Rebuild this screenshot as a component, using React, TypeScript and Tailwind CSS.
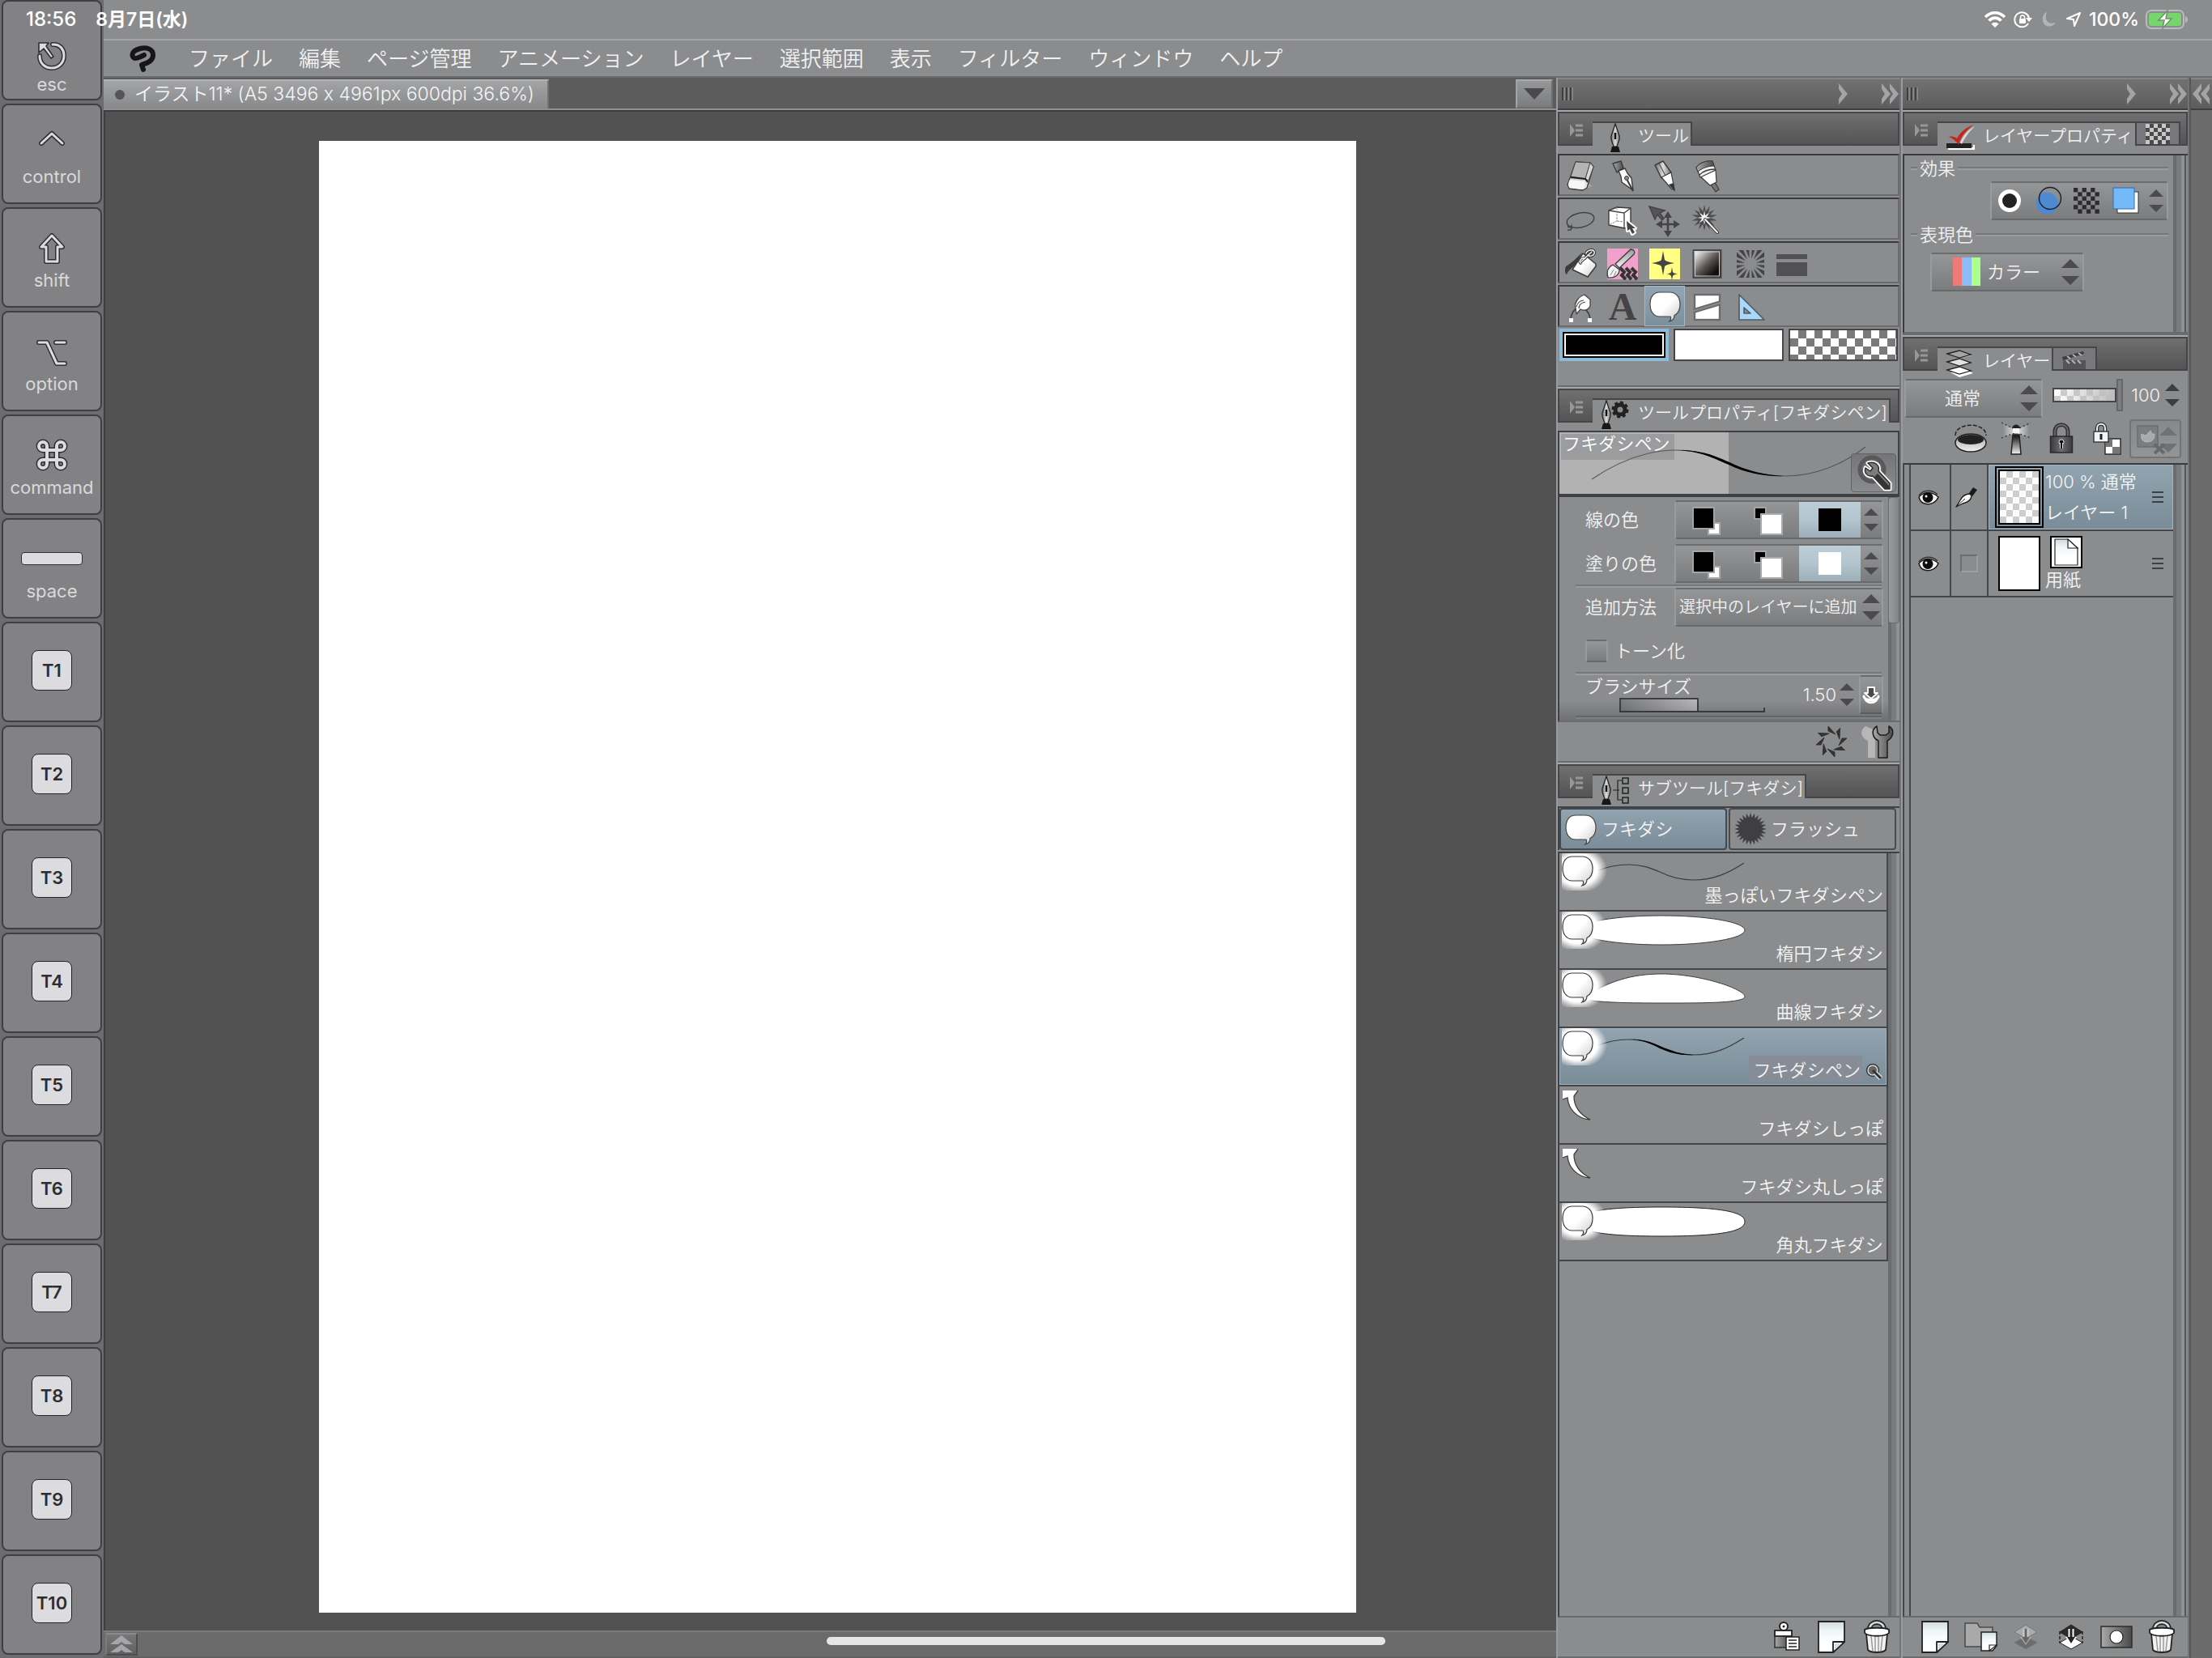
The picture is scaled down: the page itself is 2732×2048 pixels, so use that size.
import React from "react";
import type { ReactNode } from "react";

/* ---------- shared gradients ---------- */

function Defs() {
  return (
    <svg width="0" height="0" className="absolute" aria-hidden="true">
      <defs>
        <linearGradient id="wg" x1="0" y1="0" x2="1" y2="1">
          <stop offset="0.5" stopColor="#ffffff" />
          <stop offset="1" stopColor="#c9c9c9" />
        </linearGradient>
        <linearGradient id="gw" x1="0" y1="0" x2="0" y2="1">
          <stop offset="0" stopColor="#9b9b9b" />
          <stop offset="1" stopColor="#f4f4f4" />
        </linearGradient>
        <linearGradient id="metal" x1="0" y1="0" x2="1" y2="0">
          <stop offset="0" stopColor="#6b6b6b" />
          <stop offset="0.5" stopColor="#dddddd" />
          <stop offset="1" stopColor="#777777" />
        </linearGradient>
        <linearGradient id="wb" x1="0" y1="0" x2="1" y2="1">
          <stop offset="0.05" stopColor="#ffffff" />
          <stop offset="0.5" stopColor="#5a5452" />
          <stop offset="0.8" stopColor="#140c0c" />
        </linearGradient>
        <linearGradient id="bw" x1="0" y1="0" x2="0" y2="1">
          <stop offset="0.1" stopColor="#222222" />
          <stop offset="1" stopColor="#f4f4f4" />
        </linearGradient>
        <linearGradient id="dark" x1="0" y1="0" x2="1" y2="0">
          <stop offset="0" stopColor="#a9a9a9" />
          <stop offset="1" stopColor="#4a4a4a" />
        </linearGradient>
        <linearGradient id="lockg" x1="0" y1="0" x2="1" y2="0">
          <stop offset="0" stopColor="#3a3a3c" />
          <stop offset="0.5" stopColor="#6e6e70" />
          <stop offset="1" stopColor="#3a3a3c" />
        </linearGradient>
        <linearGradient id="paper" x1="0" y1="0" x2="0" y2="1">
          <stop offset="0" stopColor="#d3dadd" />
          <stop offset="0.3" stopColor="#eef5f8" />
          <stop offset="0.7" stopColor="#ffffff" />
        </linearGradient>
        <linearGradient id="beam" x1="0" y1="0" x2="1" y2="0">
          <stop offset="0" stopColor="#8b8c8e" />
          <stop offset="0.5" stopColor="#ececec" />
          <stop offset="1" stopColor="#8b8c8e" />
        </linearGradient>
        <radialGradient id="glow" cx="0.36" cy="0.44" r="0.64">
          <stop offset="0.66" stopColor="#ffffff" />
          <stop offset="1" stopColor="#ffffff" stopOpacity="0" />
        </radialGradient>
        <pattern id="chk" width="20" height="20" patternUnits="userSpaceOnUse">
          <rect width="20" height="20" fill="#ffffff" />
          <rect x="10" width="10" height="10" fill="#7a7a7a" />
          <rect y="10" width="10" height="10" fill="#7a7a7a" />
        </pattern>
        <pattern id="chkLight" width="16" height="16" patternUnits="userSpaceOnUse">
          <rect width="16" height="16" fill="#ffffff" />
          <rect x="8" width="8" height="8" fill="#cdcdcd" />
          <rect y="8" width="8" height="8" fill="#cdcdcd" />
        </pattern>
        <pattern id="chkTab" width="10" height="10" patternUnits="userSpaceOnUse">
          <rect width="10" height="10" fill="#c8c8c8" />
          <rect x="5" width="5" height="5" fill="#4a4a4a" />
          <rect y="5" width="5" height="5" fill="#4a4a4a" />
        </pattern>
      </defs>
    </svg>
  );
}

/* ---------- small shared drawings ---------- */

function Svg({ w = 48, h = 48, className = "", children }: { w?: number; h?: number; className?: string; children: ReactNode }) {
  return (
    <svg width={w} height={h} viewBox={`0 0 ${w} ${h}`} fill="none" className={`block shrink-0 ${className}`} aria-hidden="true">
      {children}
    </svg>
  );
}

const BUBBLE = "M13 1H25C33 1 38 7 38 16C38 23 36 27 31 29.500C31 33 29 36 25 37C27 35 27 33 26 31H13C5 31 1 24 1 16C1 7 5 1 13 1Z";

function Arrows({ big = false, fill = "#4b4b4d" }: { big?: boolean; fill?: string }) {
  return big ? (
    <Svg w={22} h={32}>
      <path d="M11 0L22 11H0ZM11 32L22 21H0Z" fill={fill} />
    </Svg>
  ) : (
    <Svg w={18} h={28}>
      <path d="M9 0L18 9H0ZM9 28L18 19H0Z" fill={fill} />
    </Svg>
  );
}

function Nib() {
  return (
    <g>
      <path d="M12 1L17 16C18 21 15 25 14 29H10C9 25 6 21 7 16Z" fill="url(#metal)" stroke="#1c1c1c" strokeWidth="1.2" />
      <path d="M12 12V20" stroke="#111" strokeWidth="2.4" />
      <path d="M8 29H16L18 36H6Z" fill="#161616" />
    </g>
  );
}

function Wrench() {
  return (
    <Svg w={52} h={48}>
      <circle cx="24" cy="20" r="15" stroke="#59595b" strokeWidth="5" fill="#6d6d6f" />
      <path d="M19 12L25 18L22 22L16 18C14 24 18 29 25 28L40 44H46V37L32 22C34 15 28 9 19 12Z" fill="#6a6a6c" stroke="#fff" strokeWidth="5" strokeLinejoin="round" />
      <path d="M19 12L25 18L22 22L16 18C14 24 18 29 25 28L40 44H46V37L32 22C34 15 28 9 19 12Z" fill="#7c7c7e" stroke="#2c2c2c" strokeWidth="1.5" strokeLinejoin="round" />
      <path d="M31 25L45 40V44H41L27 29Z" fill="#333" />
    </Svg>
  );
}

/* ---------- left modifier key strip ---------- */

function Outlined({ d, w = 4 }: { d: string; w?: number }) {
  return (
    <Svg w={48} h={48} className="[stroke-linecap:round] [stroke-linejoin:round]">
      <path d={d} stroke="#2f2f31" strokeWidth={w + 3} />
      <path d={d} stroke="#dcdcde" strokeWidth={w} />
    </Svg>
  );
}

const modifierKeys: { label: string; icon: ReactNode }[] = [
  { label: "control", icon: <Outlined d="M11 23L24 11L37 23" w={3} /> },
  { label: "shift", icon: <Outlined d="M24 9L37 23H31V41H17V23H11Z" w={3} /> },
  { label: "option", icon: <Outlined d="M8 13H18L30 39H40M29 13H40" w={3} /> },
  {
    label: "command",
    icon: <Outlined d="M18 18V13A5 5 0 1 0 13 18H35A5 5 0 1 0 30 13V35A5 5 0 1 0 35 30H13A5 5 0 1 0 18 35Z" />,
  },
];

const fnKeys = ["T1", "T2", "T3", "T4", "T5", "T6", "T7", "T8", "T9", "T10"];

function Key({ children, className }: { children: ReactNode; className: string }) {
  return (
    <button type="button" className={`flex min-h-0 flex-col items-center overflow-hidden rounded-lg border-2 border-[#3f3f42] bg-[#828284] ${className}`}>
      {children}
    </button>
  );
}

function KeyLabel({ children }: { children: ReactNode }) {
  return <span className="text-[22px] leading-8 text-[#d9d9db]">{children}</span>;
}

function KeyStrip() {
  return (
    <aside className="grid w-32 shrink-0 grid-rows-[repeat(16,minmax(0,1fr))] gap-1 bg-[#6d6d6f] px-0.5 pb-1">
      <Key className="pt-[46px]">
        <Svg w={48} h={40} className="[stroke-linejoin:round]">
          <path d="M25 7C34 6 39 13 39 21C39 29 33 36 24 36C15 36 9 30 9 21" stroke="#2f2f31" strokeWidth="6" strokeLinecap="round" />
          <path d="M8 5H20L17 9L26 22L23 24L14 12L8 17Z" fill="#dcdcde" stroke="#2f2f31" strokeWidth="1.6" />
          <path d="M25 7C34 6 39 13 39 21C39 29 33 36 24 36C15 36 9 30 9 21" stroke="#dcdcde" strokeWidth="3" strokeLinecap="round" />
        </Svg>
        <KeyLabel>esc</KeyLabel>
      </Key>
      {modifierKeys.map((k) => (
        <Key key={k.label} className="pt-6">
          {k.icon}
          <KeyLabel>{k.label}</KeyLabel>
        </Key>
      ))}
      <Key className="pt-6">
        <span className="flex h-12 items-center">
          <span className="h-4 w-[76px] rounded border border-[#2f2f31] bg-[#dcdcde]" />
        </span>
        <KeyLabel>space</KeyLabel>
      </Key>
      {fnKeys.map((k) => (
        <Key key={k} className="pt-[33px]">
          <span className="flex h-[50px] w-[50px] items-center justify-center rounded-lg border border-[#232325] bg-[#dcdcde] text-[22px] font-semibold text-[#2d2d2f]">
            {k}
          </span>
        </Key>
      ))}
    </aside>
  );
}

/* ---------- status bar and menu ---------- */

function StatusBar() {
  return (
    <header className="pointer-events-none absolute inset-x-0 top-0 flex h-12 items-center pr-7 pl-8 text-[23px] font-medium text-white">
      <time className="text-[24px]">18:56</time>
      <span className="ml-6 font-semibold">8月7日(水)</span>
      <div className="ml-auto flex items-center gap-2">
        <Svg w={28} h={22}>
          <path d="M2 8C9 1 19 1 26 8M6.500 12.500C11 8 17 8 21.500 12.500" stroke="#fff" strokeWidth="3.600" />
          <path d="M14 21L9.500 16.500C12 14 16 14 18.500 16.500Z" fill="#fff" />
        </Svg>
        <Svg w={24} h={22}>
          <path d="M19 16A9 9 0 1 1 20 9" stroke="#fff" strokeWidth="2" />
          <path d="M16 9H24L20 14Z" fill="#fff" />
          <rect x="8" y="10" width="8" height="6" rx="1" fill="#fff" />
          <path d="M9.500 10V8.500A2.500 2.500 0 0 1 14.500 8.500V10" stroke="#fff" strokeWidth="1.500" />
        </Svg>
        <Svg w={24} h={22}>
          <path d="M10 2C6 12 12 18 21 15C16 23 4 20 5 10C5 6 7 3 10 2Z" fill="#b3b4b6" />
        </Svg>
        <Svg w={22} h={22}>
          <path d="M19 3L12 19L11 11L3 10Z" stroke="#fff" strokeWidth="2" strokeLinejoin="round" />
        </Svg>
        <span>100%</span>
        <Svg w={54} h={24}>
          <rect x="1" y="1" width="46" height="22" rx="6" stroke="#b9babc" strokeWidth="2" />
          <rect x="4" y="4" width="40" height="16" rx="3" fill="#74d66d" />
          <path d="M49 8C53 9 53 15 49 16Z" fill="#b9babc" />
          <path d="M27 1L16 13H23L21 23L32 11H25Z" fill="#fff" stroke="#6f8f70" strokeWidth="1.500" />
        </Svg>
      </div>
    </header>
  );
}

const menus = ["ファイル", "編集", "ページ管理", "アニメーション", "レイヤー", "選択範囲", "表示", "フィルター", "ウィンドウ", "ヘルプ"];

function MenuBar() {
  return (
    <nav className="flex h-12 shrink-0 items-center gap-8 border-t-2 border-b-2 border-t-[#a5a6a8] border-b-[#6a6b6d] pt-0.5 pl-8 text-[26px] font-[350] text-[#f1f1f1]">
      <button type="button" aria-label="CLIP STUDIO" className="mr-[7px]">
        <Svg w={34} h={34}>
          <path d="M17 30L15 24C23 22 29 18 29 12C29 4 20 2 13 4C6 6 2 9 4 14C6 18 12 15 18 12" stroke="#161618" strokeWidth="6" strokeLinecap="round" strokeLinejoin="round" />
        </Svg>
      </button>
      {menus.map((m) => (
        <button key={m} type="button" className="leading-10">
          {m}
        </button>
      ))}
    </nav>
  );
}

/* ---------- canvas ---------- */

function Workspace() {
  return (
    <main className="flex min-w-0 flex-1 flex-col">
      <div className="flex h-10 shrink-0 items-end justify-between border-b-2 border-[#8f9092] bg-[#5c5c5c] pr-1">
        <button type="button" className="flex h-9 items-center gap-3 border-t-2 border-r-2 border-t-[#b1b2b4] border-r-[#707173] bg-linear-to-b from-[#a3a4a6] to-[#88898b] pr-4 pl-3.5 text-[23px] font-[350] text-[#f4f4f4]">
          <span className="h-3 w-3 rounded-full bg-[#555557]" />
          <span className="-mt-0.5 [font-feature-settings:'calt'_0]">イラスト11* (A5 3496 x 4961px 600dpi 36.6%)</span>
        </button>
        <button type="button" aria-label="ドキュメント一覧" className="flex h-9 w-[46px] items-center justify-center border-2 border-t-[#a9aaac] border-r-[#6d6e70] border-b-[#6d6e70] border-l-[#a3a4a6] bg-linear-to-b from-[#969799] to-[#7c7d7f]">
          <Svg w={26} h={14}>
            <path d="M0 0H26L13 14Z" fill="#4a4a4c" />
          </Svg>
        </button>
      </div>
      <div className="flex min-h-0 flex-1 flex-col border-t-2 border-l-2 border-[#3d3d41] bg-[#525252] pt-9 pr-[247px] pb-[22px] pl-[264px]">
        <div className="flex-1 bg-white" />
      </div>
      <footer className="flex h-[34px] shrink-0 items-center border-t-2 border-b-2 border-t-[#7b7b7d] border-b-[#5f5f61] bg-[#6b6b6b] pl-0.5">
        <button type="button" aria-label="パレットを表示" className="flex h-7 w-10 items-center justify-center border-2 border-t-[#8b8b8d] border-r-[#4e4e50] border-b-[#4e4e50] border-l-[#7b7b7d] bg-linear-to-b from-[#777779] to-[#606062]">
          <Svg w={28} h={22}>
            <path d="M14 0L28 11H18L14 8L10 11H0ZM14 11L28 21H18L14 18L10 21H0Z" fill="#a5a6a8" />
          </Svg>
        </button>
      </footer>
    </main>
  );
}

/* ---------- docks ---------- */

function Dock({ className, children }: { className: string; children: ReactNode }) {
  return (
    <section className={`flex shrink-0 flex-col border-x-2 border-l-[#9a9b9f] border-r-[#727377] bg-[#8b8c8e] ${className}`}>
      <div className="flex h-10 shrink-0 items-center border-t-2 border-b-2 border-t-[#858688] border-b-[#3f3f41] bg-linear-to-b from-[#717171] to-[#5d5d5d] pl-1">
        <Svg w={18} h={16}>
          <path d="M2 0V16M7 0V16M12 0V16" stroke="#3e3e40" strokeWidth="2" />
          <path d="M4 0V16M9 0V16M14 0V16" stroke="#a0a0a2" strokeWidth="1" />
        </Svg>
        <button type="button" aria-label="アイコン化" className="ml-auto">
          <Svg w={11} h={26}>
            <path d="M0 0L11 13L0 26V19L4 13L0 7Z" fill="#a3a4a6" />
          </Svg>
        </button>
        <button type="button" aria-label="最小化" className="ml-[42px]">
          <Svg w={22} h={26}>
            <path d="M0 0L11 13L0 26V19L4 13L0 7ZM10 0L21 13L10 26V19L14 13L10 7Z" fill="#a3a4a6" />
          </Svg>
        </button>
      </div>
      {children}
    </section>
  );
}

function Panel({ icon, title, extra, iconBox = "w-14", className = "", children }: { icon: ReactNode; title: string; extra?: ReactNode; iconBox?: string; className?: string; children: ReactNode }) {
  return (
    <section className={`flex flex-col border-t-2 border-b-2 border-t-[#a8a9ab] border-b-[#6a6b6d] ${className}`}>
      <div className="mb-2.5 flex h-[42px] shrink-0 items-end border-2 border-[#46464a] bg-linear-to-b from-[#707070] to-[#545454]">
        <button type="button" aria-label={`${title} メニュー`} className="flex h-full w-[41px] items-center justify-center pt-1">
          <Svg w={16} h={16}>
            <path d="M0 0L6 8L0 16Z" fill="#97979a" />
            <path d="M7 2H16M7 8H16M7 14H16" stroke="#97979a" strokeWidth="3" />
          </Svg>
        </button>
        <h2 className="-mb-0.5 flex h-[30px] items-start border-t-2 border-r-2 border-[#46464a] bg-[#8b8c8e] pr-0.5 text-[21px] leading-8 font-[350] whitespace-nowrap text-[#f2f2f2]">
          <span className={`h-7 ${iconBox}`}>{icon}</span>
          {title}
        </h2>
        {extra}
      </div>
      {children}
    </section>
  );
}

function ScrollTrack({ thumb = false }: { thumb?: boolean }) {
  return (
    <div className="flex w-[14px] shrink-0 flex-col border-x-4 border-l-[#6b6c6e] border-r-[#909193] bg-[#7a7b80]">
      {thumb ? <div className="-mx-1 h-[156px] rounded-sm border border-[#6a6b6d] bg-linear-to-r from-[#9b9ca0] to-[#818286]" /> : null}
    </div>
  );
}

/* ---------- tool palette ---------- */

const INK = "#444446";

function rays(cx: number, cy: number, n: number, r1: number, r2: number) {
  return Array.from({ length: n * 2 }, (_, i) => {
    const a = (Math.PI * i) / n;
    const r = i % 2 ? r1 : r2;
    return `${(cx + r * Math.sin(a)).toFixed(1)},${(cy - r * Math.cos(a)).toFixed(1)}`;
  }).join(" ");
}

const toolRows: { name: string; icon: ReactNode; active?: boolean }[][] = [
  [
    {
      name: "消しゴム",
      icon: (
        <Svg>
          <path d="M28 42L39 38L34 34Z" fill="#a5a5a7" />
          <path d="M18 8L36 9L40 14L32 40L27 43L10 41L8 36L12 25Z" fill="url(#gw)" stroke="#3a3a3a" strokeWidth="1.3" strokeLinejoin="round" />
          <path d="M12 26L30 29L36 9L18 8Z" fill="#b4b4b4" stroke="#4a4a4a" strokeWidth="1" />
          <path d="M30 29L34 31L40 14L36 9Z" fill="#d8d8d8" stroke="#4a4a4a" />
          <path d="M12 27L30 29L33 33" stroke="#1e1e1e" strokeWidth="2" />
          <path d="M11 30L30 32C30 37 28 40 26 42L11 40C8 38 9 33 11 30Z" fill="#f7f7f7" />
        </Svg>
      ),
    },
    {
      name: "ペン",
      icon: (
        <Svg>
          <path d="M12 10L22 7L25 15L17 21Z" fill="url(#dark)" stroke="#3a3a3a" strokeWidth="1.4" strokeLinejoin="round" />
          <path d="M19 19L27 16L30 22L35 28L37 43L23 33L22 26Z" fill="#f8f8f8" stroke="#3a3a3a" strokeWidth="1.4" strokeLinejoin="round" />
          <path d="M29 29L37 44" stroke="#3a3a3a" strokeWidth="2" />
          <circle cx="29" cy="28" r="2.500" fill="#8a8a8a" stroke="#3a3a3a" />
        </Svg>
      ),
    },
    {
      name: "鉛筆",
      icon: (
        <Svg>
          <path d="M12 12L22 7L32 21L20 28Z" fill="url(#metal)" stroke="#3a3a3a" strokeWidth="1.4" strokeLinejoin="round" />
          <path d="M17 10L25 25" stroke="#555" strokeWidth="1.200" />
          <path d="M20 27L32 21L36 42L33 42Z" fill="#fff" stroke="#3a3a3a" strokeWidth="1.2" strokeLinejoin="round" />
          <path d="M29 36L35 34L37 45Z" fill="#333" />
        </Svg>
      ),
    },
    {
      name: "筆",
      icon: (
        <Svg>
          <path d="M29 36L34 33L39 42L35 45Z" fill="#777" stroke="#3a3a3a" strokeWidth="1.2" />
          <path d="M16 26L35 18L36 33L28 37Z" fill="#fff" stroke="#3a3a3a" strokeWidth="1.2" strokeLinejoin="round" />
          <path d="M11 15C15 9 24 6 31 7L35 18L16 27Z" fill="#f0f0f0" stroke="#3a3a3a" strokeWidth="1.2" strokeLinejoin="round" />
          <path d="M11 15C15 9 24 6 31 7L33 13C25 13 18 16 13 20Z" fill="url(#dark)" stroke="#3a3a3a" />
          <path d="M15 24C20 19 27 17 34 17" stroke="#3a3a3a" strokeWidth="1.500" />
        </Svg>
      ),
    },
  ],
  [
    {
      name: "投げなわ選択",
      icon: (
        <Svg>
          <ellipse cx="24" cy="26" rx="17" ry="9" transform="rotate(-12 24 26)" stroke={INK} strokeWidth="1.5" />
          <path d="M9 32C7 35 12 36 13 33C14 37 12 39 8 38" stroke={INK} strokeWidth="1.5" />
        </Svg>
      ),
    },
    {
      name: "操作",
      icon: (
        <Svg>
          <path d="M7 14L17 10L34 11V31L27 36L7 32Z" fill="#fff" stroke="#3c3c3c" strokeWidth="1.4" strokeLinejoin="round" />
          <path d="M7 14L26 17V36M26 17L34 11" stroke="#3c3c3c" strokeWidth="1.300" />
          <path d="M17 10V27L7 32M17 27L34 29" stroke="#8d8d8d" strokeDasharray="3 1" />
          <path d="M29 27L30 39L33 37L36 43L39 41L36 36L40 36Z" fill="#444" stroke="#fff" strokeWidth="4" strokeLinejoin="round" />
          <path d="M29 27L30 39L33 37L36 43L39 41L36 36L40 36Z" fill="#444" />
        </Svg>
      ),
    },
    {
      name: "レイヤー移動",
      icon: (
        <Svg>
          <path d="M5 9L24 14L18 17L23 24L21 26L15 19L12 25Z" fill="#555557" stroke={INK} strokeWidth="1.500" />
          <path d="M28 20V42M17 31H39" stroke={INK} strokeWidth="2.600" />
          <path d="M28 15L33 23H23ZM28 47L33 39H23ZM13 31L21 26V36ZM43 31L35 26V36Z" fill={INK} />
        </Svg>
      ),
    },
    {
      name: "自動選択",
      icon: (
        <Svg>
          <polygon points={rays(21, 23, 14, 8, 16)} fill="#4c4c4e" />
          <polygon points={rays(21, 23, 8, 3, 9)} fill="#f5f5f5" />
          <path d="M22 25L37 41" stroke="#333" strokeWidth="4" strokeLinecap="round" />
          <path d="M22 25L37 41" stroke="#f5f5f5" strokeWidth="2" strokeLinecap="round" />
        </Svg>
      ),
    },
  ],
  [
    {
      name: "塗りつぶし",
      icon: (
        <Svg>
          <path d="M27 13L43 26V29L33 42L14 33Z" fill="url(#wg)" stroke="#3c3c3c" strokeWidth="1.500" strokeLinejoin="round" />
          <path d="M26 12C18 20 14 24 6 29C4 34 5 38 7 39C9 33 16 30 19 25Z" fill="#3c3c3c" />
          <path d="M24 25C22 23 24 18 30 19M25 23L38 11M31 13C32 9 40 7 41 11C42 15 36 18 33 15" stroke="#333" strokeWidth="3.500" strokeLinecap="round" />
          <path d="M24 25C22 23 24 18 30 19M25 23L38 11M31 13C32 9 40 7 41 11C42 15 36 18 33 15" stroke="#f5f5f5" strokeWidth="1.500" strokeLinecap="round" />
        </Svg>
      ),
    },
    {
      name: "パターンブラシ",
      icon: (
        <Svg>
          <rect x="5" y="7" width="38" height="38" fill="#f19fcb" />
          <path d="M21 31L26 36L23 40L28 45M28 31L33 36L30 40L35 45M35 31L40 36L37 40L42 45" stroke="#333" strokeWidth="4" />
          <path d="M15 26L34 8C38 8 40 11 38 14L20 31Z" fill="url(#gw)" stroke="#3c3c3c" strokeWidth="1.3" />
          <path d="M12 27L20 33C20 40 14 44 6 43C4 36 6 30 12 27Z" fill="#f3f3f3" stroke="#3c3c3c" strokeWidth="1.3" />
          <path d="M9 40L13 33M13 42L16 35" stroke="#888" />
        </Svg>
      ),
    },
    {
      name: "デコレーション",
      icon: (
        <Svg>
          <rect x="5" y="7" width="38" height="38" fill="#fffd82" />
          <path d="M22 10L24 21Q25 23 36 25Q25 27 24 29L22 40L20 29Q19 27 8 25Q19 23 20 21Z" fill={INK} />
          <path d="M33 30L34 36Q35 38 41 38Q35 39 34 41L33 46L32 41Q31 39 26 38Q31 38 32 36Z" fill={INK} />
        </Svg>
      ),
    },
    {
      name: "グラデーション",
      icon: (
        <Svg>
          <rect x="7.500" y="9" width="34" height="34" fill="url(#wb)" stroke="#48484a" strokeWidth="2" />
          <rect x="9.500" y="11" width="30" height="30" stroke="#d0d0d0" />
        </Svg>
      ),
    },
    {
      name: "集中線",
      icon: (
        <Svg>
          <svg x="9" y="9" width="34" height="34" viewBox="0 0 34 34">
            {Array.from({ length: 16 }, (_, i) => (
              <path key={i} d="M17 10L13.500 -9H20.500Z" fill={INK} transform={`rotate(${i * 22.5 + 11} 17 17)`} />
            ))}
          </svg>
        </Svg>
      ),
    },
    {
      name: "流線",
      icon: (
        <Svg>
          <path d="M6 14H44V20H6ZM6 24H44V41H6Z" fill="#515153" />
        </Svg>
      ),
    },
  ],
  [
    {
      name: "線修正",
      icon: (
        <Svg>
          <path d="M12 40C13 31 18 26 24 26S35 32 36 40" stroke={INK} strokeWidth="1.800" />
          <path d="M29 10L36 16V24C33 30 28 30 24 28L19 34L18 26C16 20 22 12 29 10Z" fill="#fff" stroke={INK} strokeWidth="1.300" strokeLinejoin="round" />
          <path d="M22 27C22 23 25 20 30 19M19 25C20 20 24 17 28 17" stroke={INK} strokeWidth="1.200" />
          <path d="M10 39H15V44H10ZM33 39H38V44H33Z" fill="#fff" />
        </Svg>
      ),
    },
    {
      name: "テキスト",
      icon: <span className="font-['Liberation_Serif',serif] text-[48px] leading-[50px] font-bold text-[#444446]">A</span>,
    },
    {
      name: "フキダシ",
      active: true,
      icon: (
        <Svg>
          <path d={BUBBLE} transform="translate(5 6)" fill="url(#wg)" stroke="#444" strokeWidth="1.2" />
        </Svg>
      ),
    },
    {
      name: "コマ枠",
      icon: (
        <Svg>
          <rect x="9" y="10" width="31" height="31" fill="#fff" stroke="#6a6b6d" strokeWidth="2.400" />
          <path d="M8 32L41 22V18L8 28Z" fill="#8b8c8e" />
          <path d="M8 32L41 22M8 28L41 18" stroke="#6a6b6d" strokeWidth="2" />
        </Svg>
      ),
    },
    {
      name: "定規",
      icon: (
        <Svg>
          <path fillRule="evenodd" d="M12 10L43 41H12ZM18 26V33H26Z" fill="#a9d8fa" stroke="#4b5a66" strokeWidth="1.600" strokeLinejoin="round" />
        </Svg>
      ),
    },
  ],
];

function ToolPanel() {
  return (
    <Panel
      title="ツール"
      icon={
        <Svg w={52} h={38}>
          <g transform="translate(16 0)">
            <Nib />
          </g>
        </Svg>
      }
    >
      <div className="flex flex-col gap-0.5">
        {toolRows.map((row, i) => (
          <div key={i} className="flex h-[52px] gap-1 border-2 border-t-[#3b3b3e] border-r-[#6a6b6d] border-b-[#6a6b6d] border-l-[#3b3b3e] px-0.5">
            {row.map((t) => (
              <button
                key={t.name}
                type="button"
                aria-label={t.name}
                aria-pressed={!!t.active}
                className={t.active ? "h-12 w-12 bg-linear-to-b from-[#93a5b3] to-[#7c8f9c] outline outline-[#a5b9c6]" : "h-12 w-12"}
              >
                {t.icon}
              </button>
            ))}
          </div>
        ))}
      </div>
      <div className="mt-0.5 mb-[30px] grid grid-cols-3 gap-1.5 px-0.5">
        <button type="button" aria-label="メインカラー" className="h-10 bg-[#8cbadb] p-1">
          <span className="block h-8 border-2 border-black bg-white p-0.5">
            <span className="block h-6 bg-black" />
          </span>
        </button>
        <button type="button" aria-label="サブカラー" className="h-10 border-2 border-[#444548] bg-white" />
        <button type="button" aria-label="透明色" className="h-10 overflow-hidden border-2 border-[#444548]">
          <svg className="block h-9 w-full" aria-hidden="true">
            <rect width="100%" height="100%" fill="url(#chk)" />
          </svg>
        </button>
      </div>
    </Panel>
  );
}

/* ---------- tool property palette ---------- */

const buttonFace = "rounded-sm border-2 border-t-[#6a6b6d] border-r-[#9a9b9d] border-b-[#68696b] border-l-[#9a9b9d] bg-linear-to-b from-[#959698] to-[#7b7c7e]";

function Divider() {
  return <div className="mt-0.5 mr-2 h-1 shrink-0 border-t-2 border-b-2 border-t-[#76777a] border-b-[#9b9c9e]" />;
}

function ColorChoice({ label, own }: { label: string; own: string }) {
  return (
    <div className="flex h-12 items-center pr-1.5 pl-3" role="group" aria-label={label}>
      <span className="flex-1">{label}</span>
      <div className={`flex h-12 w-[258px] ${buttonFace}`}>
        <button type="button" aria-label={`${label} メイン`} className="flex w-[76px] items-center justify-center">
          <Svg w={38} h={40}>
            <rect x="21" y="24" width="14" height="14" fill="#fff" stroke="#aaabad" strokeWidth="2" />
            <rect x="2" y="5" width="26" height="26" fill="#000" stroke="#a3a4a6" strokeWidth="2" />
          </Svg>
        </button>
        <button type="button" aria-label={`${label} サブ`} className="flex w-[76px] items-center justify-center">
          <Svg w={38} h={40}>
            <rect x="2" y="5" width="14" height="14" fill="#000" stroke="#a3a4a6" strokeWidth="2" />
            <rect x="10" y="13" width="26" height="25" fill="#fff" stroke="#aaabad" strokeWidth="2" />
          </Svg>
        </button>
        <button type="button" aria-label={`${label} 指定`} aria-pressed="true" className="flex w-[76px] items-center justify-center bg-linear-to-b from-[#bccdd8] via-[#b4c5d0] to-[#9caeb8]">
          <span className={`h-7 w-7 ${own}`} />
        </button>
        <button type="button" aria-label={`${label} 切り替え`} className="flex flex-1 items-center justify-center">
          <Arrows />
        </button>
      </div>
    </div>
  );
}

function ToolPropertyPanel() {
  return (
    <Panel
      title="ツールプロパティ[フキダシペン]"
      icon={
        <Svg w={52} h={38}>
          <g transform="translate(5 0)">
            <Nib />
          </g>
          <circle cx="34" cy="12" r="6" stroke="#222" strokeWidth="5" />
          <circle cx="34" cy="12" r="9" stroke="#222" strokeWidth="3" strokeDasharray="4 3" />
        </Svg>
      }
    >
      <div className="relative h-20 border-2 border-[#3f4043]">
        <div className="h-full w-1/2 bg-[#b2b2b2]" />
        <span className="absolute top-0.5 left-0.5 h-8 bg-[#9b9c9e] pr-1.5 pl-0.5 text-[22px] leading-6 font-[350] text-white">フキダシペン</span>
        <svg viewBox="0 0 418 76" preserveAspectRatio="none" className="absolute inset-0 h-full w-full" fill="none" aria-hidden="true">
          <path d="M40 58C75 34 110 22 145 22C175 22 190 31 209 38C235 50 255 54 279 54C315 54 350 40 378 18" stroke="#55565a" strokeWidth="1.1" />
          <path d="M145 22C175 21.500 192 29 209 36.500C232 48 255 53 279 54C255 55 232 51 209 40C190 32 175 23.500 145 22Z" fill="#000" />
        </svg>
        <button type="button" aria-label="サブツール詳細" className="absolute right-0.5 bottom-0.5 flex h-12 w-14 items-center justify-center rounded-sm border border-[#616265] bg-linear-to-b from-[#757678] to-[#8a8b8d]">
          <Wrench />
        </button>
      </div>
      <div className="flex h-[280px] border-t-2 border-b-2 border-l-2 border-t-[#3f4043] border-b-[#6a6b6d] border-l-[#3f4043]">
        <div className="relative flex flex-1 flex-col overflow-hidden pt-1 pl-5 text-[22px] font-[350] text-[#f2f2f2]">
          <ColorChoice label="線の色" own="bg-black" />
          <div className="h-1.5 shrink-0" />
          <ColorChoice label="塗りの色" own="bg-white" />
          <Divider />
          <div className="flex h-12 shrink-0 items-center pr-1.5 pl-3">
            <label htmlFor="add" className="flex-1">
              追加方法
            </label>
            <div className="relative w-[258px]">
              <select id="add" className={`h-12 w-full appearance-none pl-1 text-[20px] ${buttonFace}`}>
                <option>選択中のレイヤーに追加</option>
              </select>
              <span className="pointer-events-none absolute top-2 right-1">
                <Arrows big />
              </span>
            </div>
          </div>
          <label className="mt-1.5 flex h-12 shrink-0 items-center gap-2 pl-3">
            <input type="checkbox" className={`h-7 w-7 appearance-none ${buttonFace}`} />
            トーン化
          </label>
          <Divider />
          <div className="flex h-12 shrink-0 items-center pr-1.5 pl-3">
            <label className="relative flex h-12 flex-1 flex-col">
              <span className="leading-7">ブラシサイズ</span>
              <span className="ml-[42px] flex w-[180px] items-end">
                <span className="h-[18px] w-[98px] border-2 border-[#3f4043] bg-linear-to-r from-[#7b7c7e] to-[#b5b5b7]" />
                <span className="h-1.5 flex-1 border-r-2 border-b-2 border-[#3f4043]" />
              </span>
              <input type="range" min="0" max="3" step="0.1" defaultValue="1.5" className="absolute bottom-0 left-[42px] w-[180px] opacity-0" />
            </label>
            <input aria-label="ブラシサイズの値" defaultValue="1.50" className="mr-1 w-14 bg-transparent text-right" />
            <Arrows />
            <button type="button" aria-label="ブラシサイズ影響元設定" className={`ml-1.5 flex h-12 w-[30px] items-center justify-center ${buttonFace}`}>
              <Svg w={22} h={24}>
                <path d="M2 14C2 20 20 20 20 14M4 18C7 23 15 23 18 18" stroke="#fff" strokeWidth="3" strokeLinecap="round" />
                <path d="M7 3H15V10H19L11 17L3 10H7Z" fill="#4a4a4c" stroke="#fff" strokeWidth="1.800" strokeLinejoin="round" />
              </Svg>
            </button>
          </div>
          <Divider />
          <div className="pointer-events-none absolute inset-x-0 bottom-0 h-6 bg-linear-to-b from-transparent to-black/20" />
        </div>
        <ScrollTrack thumb />
      </div>
      <div className="flex h-12 items-center justify-end gap-2 pr-1">
        <button type="button" aria-label="初期設定に戻す">
          <Svg>
            {Array.from({ length: 8 }, (_, i) => (
              <path key={i} d="M20 5L29 15L20 11Z" fill="#333" stroke="#333" transform={`rotate(${i * 45} 24 24)`} />
            ))}
          </Svg>
        </button>
        <button type="button" aria-label="詳細パレット">
          <Svg>
            <path d="M10 5C1 12 6 20 13 23V44H22V10Z" fill="#b7b7b7" />
            <path d="M24 5C16 10 19 20 26 23V44H37V23C44 19 47 10 39 5V13L35 16H28L25 13Z" fill="url(#dark)" stroke="#1c1c1c" strokeWidth="1.500" strokeLinejoin="round" />
          </Svg>
        </button>
      </div>
    </Panel>
  );
}

/* ---------- sub tool palette ---------- */

type Shape = "thin" | "pen" | "ellipse" | "curve" | "round" | "tail";

const subTools: { name: string; shape: Shape; active?: boolean }[] = [
  { name: "墨っぽいフキダシペン", shape: "thin" },
  { name: "楕円フキダシ", shape: "ellipse" },
  { name: "曲線フキダシ", shape: "curve" },
  { name: "フキダシペン", shape: "pen", active: true },
  { name: "フキダシしっぽ", shape: "tail" },
  { name: "フキダシ丸しっぽ", shape: "tail" },
  { name: "角丸フキダシ", shape: "round" },
];

function SubToolArt({ shape }: { shape: Shape }) {
  if (shape === "tail") {
    return (
      <Svg w={240} h={46} className="absolute top-0 left-0">
        <path d="M4 5H23L18 12C18 26 26 35 38 41C22 40 11 28 10 14L4 16Z" fill="#fff" />
        <path d="M23 5L18 12C18 26 26 35 38 41C22 40 11 28 10 14L4 16" stroke="#3c3c3c" strokeWidth="1.300" />
      </Svg>
    );
  }
  return (
    <Svg w={240} h={46} className="absolute top-0 left-0">
      {shape === "ellipse" ? <ellipse cx="126" cy="23" rx="103" ry="18" fill="#fff" stroke="#3c3c3c" /> : null}
      {shape === "round" ? <path d="M126 5C200 5 229 11 229 23S200 41 126 41S23 35 23 23S52 5 126 5Z" fill="#fff" stroke="#222" /> : null}
      {shape === "curve" ? <path d="M30 34C60 14 90 5 126 5C175 5 229 24 229 33C228 41 180 41 126 41C80 41 30 40 30 34Z" fill="#fff" stroke="#3c3c3c" /> : null}
      {shape === "thin" || shape === "pen" ? (
        <path d="M46 22C60 16 72 14 86 14C102 14 112 18 124 23C138 30 150 33 166 33C190 33 208 25 228 12" stroke="#3a3a3a" strokeWidth="1.1" />
      ) : null}
      {shape === "pen" ? <path d="M88 13.500C104 13.500 113 17 124 22C138 28 150 32 166 33C150 34 138 31 124 25C112 19 104 15 88 13.500Z" fill="#000" /> : null}
      <rect x="3" y="0" width="56" height="46" fill="url(#glow)" />
      <path d={BUBBLE} transform="translate(3 3)" fill="url(#wg)" stroke="#3a3a3a" strokeWidth="1.2" />
    </Svg>
  );
}

function FooterIconPage() {
  return (
    <Svg>
      <path d="M8 5H40V30L26 43H8Z" fill="url(#paper)" stroke="#222" strokeWidth="1.800" />
      <path d="M26 43V30H40Z" fill="#fff" stroke="#222" strokeWidth="1.800" strokeLinejoin="round" />
      <path d="M28 40V32H37Z" fill="#cfe0e6" />
    </Svg>
  );
}

function FooterIconTrash() {
  return (
    <Svg>
      <path d="M15 15C15 3 33 3 33 15" stroke="#222" strokeWidth="6" />
      <path d="M15 15C15 3 33 3 33 15" stroke="#d5dde0" strokeWidth="2.600" />
      <path d="M11 20H37L35 40C31 44 17 44 13 40Z" fill="#f2f2f2" stroke="#222" strokeWidth="1.800" />
      <path d="M17 23L19 41M22 23V42M26 23V42M31 23L29 41" stroke="#9a9a9a" strokeWidth="1.500" />
      <path d="M9 15C13 12 35 12 39 15V19C35 24 13 24 9 19Z" fill="#fff" stroke="#222" strokeWidth="1.800" />
    </Svg>
  );
}

function SubToolPanel() {
  return (
    <Panel
      title="サブツール[フキダシ]"
      className="min-h-0 flex-1"
      icon={
        <Svg w={52} h={38}>
          <g transform="translate(5 0)">
            <Nib />
          </g>
          <path d="M25 18H33M36 6H31V30H36" stroke="#222" strokeWidth="1.200" />
          <path d="M37 3H44V10H37ZM37 15H44V22H37ZM37 27H44V34H37Z" stroke="#222" strokeWidth="1.500" />
        </Svg>
      }
    >
      <div className="flex h-[54px] shrink-0 gap-0.5 border-t-2 border-l-2 border-[#3f4043] pr-1 text-[22px] font-[350] text-[#f4f4f4]">
        <button type="button" className="flex flex-1 items-center gap-1 rounded-sm border-2 border-[#3f4a52] bg-linear-to-b from-[#93a4b1] to-[#7a8c98] pl-1">
          <Svg w={42} h={42}>
            <path d={BUBBLE} transform="translate(1 3)" fill="url(#wg)" stroke="#444" strokeWidth="1.2" />
          </Svg>
          フキダシ
        </button>
        <button type="button" className="flex flex-1 items-center gap-1 rounded-sm border-2 border-[#4a4b4e] pl-1">
          <Svg w={42} h={42}>
            <polygon points={rays(21, 21, 24, 14, 20)} fill="#3f3f41" />
          </Svg>
          フラッシュ
        </button>
      </div>
      <div className="mt-0.5 flex min-h-0 flex-1 border-t-2 border-b-2 border-l-2 border-t-[#3f4043] border-b-[#6a6b6d] border-l-[#3f4043]">
        <ul className="flex-1 text-[22px] font-[350] text-[#f4f4f4]">
          {subTools.map((s) => (
            <li key={s.name} className="border-r-2 border-b-2 border-[#45464a]">
              <button
                type="button"
                className={
                  s.active
                    ? "relative flex h-[70px] w-full items-end justify-end bg-linear-to-b from-[#93a4b1] to-[#7a8c98] pr-1 pb-1 ring-1 ring-[#9cb0bd] ring-inset"
                    : "relative flex h-[70px] w-full items-end justify-end pr-1"
                }
              >
                <SubToolArt shape={s.shape} />
                {s.active ? (
                  <>
                    <span className="mr-1 h-8 bg-[#868d96] pr-0.5 pl-1.5 leading-9">{s.name}</span>
                    <Svg w={22} h={24}>
                      <circle cx="9" cy="10" r="6" fill="#666" stroke="#dcdcdc" strokeWidth="1.500" />
                      <circle cx="9" cy="10" r="7.500" stroke="#3c3c3c" strokeWidth="1.500" />
                      <path d="M12 13L19 20" stroke="#ddd" strokeWidth="6" />
                      <path d="M9 10L19 20" stroke="#333" strokeWidth="3" />
                    </Svg>
                  </>
                ) : (
                  <span className="leading-9">{s.name}</span>
                )}
              </button>
            </li>
          ))}
        </ul>
        <ScrollTrack />
      </div>
      <div className="flex h-12 shrink-0 justify-end gap-2 pr-1">
        <button type="button" aria-label="サブツール素材を追加">
          <Svg>
            <rect x="10" y="20" width="18" height="17" fill="url(#dark)" stroke="#333" strokeWidth="1.500" />
            <rect x="10" y="16" width="21" height="7" fill="#fff" stroke="#222" strokeWidth="1.800" />
            <ellipse cx="21" cy="11" rx="5" ry="5" fill="#fff" stroke="#222" strokeWidth="2" />
            <circle cx="21" cy="11" r="1.500" fill="#222" />
            <rect x="24" y="24" width="16" height="16" fill="#fff" stroke="#222" strokeWidth="1.500" />
            <path d="M27 28H37M27 32H37M27 36H37" stroke="#222" strokeWidth="1.500" />
          </Svg>
        </button>
        <button type="button" aria-label="サブツールを複製">
          <FooterIconPage />
        </button>
        <button type="button" aria-label="サブツールを削除">
          <FooterIconTrash />
        </button>
      </div>
    </Panel>
  );
}

/* ---------- layer property palette ---------- */

function GroupTitle({ children }: { children: ReactNode }) {
  return (
    <div className="flex h-8 items-center gap-[3px]">
      <span className="h-1 w-2 border-t-2 border-b-2 border-t-[#76777a] border-b-[#9b9c9e]" />
      <span>{children}</span>
      <span className="h-1 flex-1 border-t-2 border-b-2 border-t-[#76777a] border-b-[#9b9c9e]" />
    </div>
  );
}

function LayerPropertyPanel() {
  return (
    <Panel
      title="レイヤープロパティ"
      icon={
        <Svg w={52} h={38}>
          <path d="M13 30H44V27H46V33H13Z" fill="#fff" />
          <rect x="11" y="25" width="31" height="6" fill="#222" />
          <path d="M28 24C32 14 38 8 46 4C38 12 34 18 30 26Z" fill="#d8d8d8" />
          <path d="M14 17C18 16 22 17 24 19C28 11 36 5 45 2C36 8 29 16 26 27C23 22 19 19 14 17Z" fill="#c8261c" />
        </Svg>
      }
      extra={
        <button type="button" aria-label="素材" className="flex h-7 w-[54px] items-end justify-center border-t-2 border-r-2 border-[#46464a] bg-[#77787c]">
          <Svg w={30} h={25}>
            <rect width="30" height="25" fill="url(#chkTab)" />
          </Svg>
        </button>
      }
    >
      <div className="flex h-[222px] border-t-2 border-b-2 border-l-2 border-t-[#3b3b3e] border-b-[#6a6b6d] border-l-[#3b3b3e] text-[22px] font-[350] text-[#f2f2f2]">
        <div className="flex flex-1 flex-col pr-1.5 pl-2">
          <GroupTitle>効果</GroupTitle>
          <div className={`ml-auto flex h-12 w-[220px] items-center justify-between pr-1 pl-1.5 ${buttonFace}`}>
            <button type="button" aria-label="境界効果">
              <Svg w={32} h={36}>
                <circle cx="16" cy="18" r="11.500" fill="#222" stroke="#fff" strokeWidth="5" />
              </Svg>
            </button>
            <button type="button" aria-label="線抽出">
              <Svg w={36} h={36}>
                <circle cx="17" cy="21" r="13.500" fill="#4d8ad2" />
                <circle cx="21" cy="15" r="13.500" stroke="#16202c" strokeWidth="1.400" />
              </Svg>
            </button>
            <button type="button" aria-label="トーン">
              <Svg w={34} h={36}>
                {Array.from({ length: 36 }, (_, i) => {
                  const r = Math.floor(i / 6);
                  const c = i % 6;
                  return (r + c) % 2 === 0 ? <rect key={i} x={2 + c * 5.3} y={2 + r * 5.3} width="5.3" height="5.3" fill="#2c2c2e" /> : null;
                })}
              </Svg>
            </button>
            <button type="button" aria-label="レイヤーカラー">
              <Svg w={36} h={36}>
                <rect x="9" y="7" width="26" height="26" fill="#fff" stroke="#333" />
                <rect x="4" y="2" width="26" height="26" fill="#74b9f8" stroke="#2f6ea8" />
              </Svg>
            </button>
            <Arrows />
          </div>
          <div className="h-0.5" />
          <GroupTitle>表現色</GroupTitle>
          <div className="relative mt-1.5 ml-6 w-[190px]">
            <select aria-label="表現色" className={`h-12 w-full appearance-none pl-[68px] ${buttonFace}`}>
              <option>カラー</option>
            </select>
            <span className="pointer-events-none absolute top-1.5 left-7 flex h-[35px] w-[34px]">
              <span className="flex-1 bg-[#ee7b78]" />
              <span className="flex-1 bg-[#8cbcf8]" />
              <span className="flex-1 bg-[#adff8c]" />
            </span>
            <span className="pointer-events-none absolute top-2 right-1.5">
              <Arrows big />
            </span>
          </div>
        </div>
        <ScrollTrack />
        <div className="w-1 border-l-2 border-[#55565a]" />
      </div>
    </Panel>
  );
}

/* ---------- layer palette ---------- */

function Eye() {
  return (
    <Svg w={28} h={24}>
      <path d="M2 12C7 5 20 4 26 10C24 18 16 22 9 20C5 19 3 16 2 12Z" fill="#f2f2f2" />
      <path d="M2 12C7 5 20 5 26 12C23 19 16 22 9 20C5 19 3 16 2 12" stroke="#1a1a1a" strokeWidth="1.500" />
      <path d="M2 10C8 2 19 3 25 9" stroke="#333" strokeWidth="1.600" />
      <circle cx="13" cy="12.500" r="6.500" fill="#0d0d0d" />
      <circle cx="11" cy="11" r="1.500" fill="#fff" />
    </Svg>
  );
}

function Grip() {
  return (
    <Svg w={14} h={16}>
      <path d="M0 2H14M0 8H14M0 14H14" stroke="#3f4043" strokeWidth="2" />
    </Svg>
  );
}

function MergeIcon({ top, bottom, stroke, dashed }: { top: string; bottom: string; stroke: string; dashed?: boolean }) {
  return (
    <Svg>
      {dashed ? <path d="M10 17V32M38 17V32" stroke="#222" strokeWidth="1.500" strokeDasharray="4 2" /> : null}
      <path d="M24 9L38 18L24 26L10 18Z" fill={top} stroke={stroke} />
      <path d="M24 23L38 31L24 39L10 31Z" fill={bottom} stroke={stroke} />
      <path d="M24 14V26" stroke="#fff" strokeOpacity={dashed ? 1 : 0.4} strokeWidth="7" />
      <path d="M24 34L17 24H31Z" fill="#fff" fillOpacity={dashed ? 1 : 0.4} />
      <path d="M24 14V26" stroke={dashed ? "#222" : "#666"} strokeWidth="3" />
      <path d="M24 32L19 24H29Z" fill={dashed ? "#222" : "#666"} />
    </Svg>
  );
}

function LayerPanel() {
  return (
    <Panel
      title="レイヤー"
      className="min-h-0 flex-1"
      icon={
        <Svg w={52} h={38}>
          <path d="M16 30L27 36L44 31L38 28Z" fill="#fff" />
          <path d="M14 8L27 13L43 9" fill="#ccc" />
          <path d="M12 7L27 3L41 8L27 12Z" fill="#a5a5a5" stroke="#222" strokeWidth="1.300" />
          <path d="M12 17L27 13L41 18L27 22Z" fill="#e2e2e2" stroke="#222" strokeWidth="1.300" />
          <path d="M12 27L27 23L41 28L27 32Z" fill="#fff" stroke="#222" strokeWidth="1.300" />
        </Svg>
      }
      extra={
        <button type="button" aria-label="タイムライン" className="flex h-7 w-[54px] items-end justify-center border-t-2 border-r-2 border-[#46464a] bg-[#77787c]">
          <Svg w={30} h={23}>
            <rect x="1" y="12" width="28" height="11" fill="#555557" />
            <path d="M0 8L26 1L27 4L1 12Z" fill="#3c3c3e" />
            <path d="M6 7L10 10M13 5L17 8M20 3L24 6M5 12L9 16M12 12L16 16M19 12L23 16" stroke="#b5b5b7" strokeWidth="2" />
          </Svg>
        </button>
      }
    >
      <div className="flex h-12 shrink-0 items-start pr-2.5 pl-0.5 text-[22px] font-[350] text-[#f2f2f2]">
        <div className="relative w-[172px]">
          <select aria-label="合成モード" className={`h-12 w-full appearance-none pl-12 ${buttonFace}`}>
            <option>通常</option>
          </select>
          <span className="pointer-events-none absolute top-2 right-1.5">
            <Arrows big />
          </span>
        </div>
        <label className="relative ml-3 flex h-10 w-[88px] items-center" aria-label="不透明度">
          <span className="relative h-[18px] flex-1 border-2 border-[#444548]">
            <svg className="block h-full w-full" aria-hidden="true">
              <rect width="100%" height="100%" fill="url(#chkLight)" />
            </svg>
            <span className="absolute inset-0 bg-linear-to-r from-transparent to-[#bdbdbd]" />
          </span>
          <span className="h-10 w-2 border-2 border-[#66676a] bg-[#7d7e81]" />
          <input type="range" defaultValue="100" className="absolute inset-0 w-full opacity-0" />
        </label>
        <input aria-label="不透明度の値" defaultValue="100" className="ml-2 h-10 w-[44px] min-w-0 bg-transparent pl-0.5" />
        <span className="mt-1.5">
          <Arrows fill="#3c3d40" />
        </span>
      </div>
      <div className="mt-0.5 mb-1.5 flex h-12 shrink-0 justify-end pr-2">
        <button type="button" aria-label="下のレイヤーでクリッピング" className="flex w-14 justify-center">
          <Svg w={40} h={48}>
            <path d="M1 20C1 3 39 3 39 20" stroke="#222" strokeWidth="1.500" strokeDasharray="5 2" />
            <ellipse cx="20" cy="29" rx="19" ry="11" fill="url(#gw)" stroke="#222" strokeWidth="1.500" />
            <ellipse cx="20" cy="25" rx="16" ry="6" fill="#222" />
          </Svg>
        </button>
        <button type="button" aria-label="参照レイヤーに設定" className="flex w-14 justify-center">
          <Svg w={40} h={48}>
            <path d="M4 6L20 13L36 6V22L20 17L4 22Z" fill="url(#beam)" />
            <path d="M2 4L20 13L38 4M2 23L20 16L38 23" stroke="#333" strokeWidth="1.300" strokeDasharray="2 3" />
            <path d="M16 19H24L26 43H14Z" fill="url(#bw)" stroke="#222" strokeWidth="1.500" />
            <rect x="16" y="11" width="8" height="6" fill="#f5f5f5" />
            <path d="M15 11C16 5 24 5 25 11Z" fill="#222" />
          </Svg>
        </button>
        <button type="button" aria-label="レイヤーをロック" className="flex w-14 justify-center">
          <Svg w={40} h={48}>
            <path d="M12 22V15C12 4 28 4 28 15V22" stroke="#333335" strokeWidth="5" />
            <path d="M12 22V15C12 4 28 4 28 15V22" stroke="#77777a" strokeWidth="1.500" />
            <rect x="6.500" y="21" width="27" height="20" fill="url(#lockg)" stroke="#2a2a2c" strokeWidth="1.500" />
            <circle cx="20" cy="28" r="3" fill="#111" stroke="#ddd" />
            <path d="M20 29V36" stroke="#ddd" strokeWidth="4" />
            <path d="M20 29V36" stroke="#111" strokeWidth="2" />
          </Svg>
        </button>
        <button type="button" aria-label="透明ピクセルをロック" className="flex w-14 justify-center">
          <Svg w={40} h={48}>
            <path d="M8 15V11C8 4 18 4 18 11V15" stroke="#333" strokeWidth="4.500" />
            <path d="M8 15V11C8 4 18 4 18 11V15" stroke="#e8eef2" strokeWidth="2" />
            <rect x="18" y="24" width="19" height="19" fill="#fff" stroke="#222" strokeWidth="1.400" />
            <path d="M19 25H27V34H19ZM27 34H36V42H27Z" fill="#77777a" />
            <rect x="4" y="15" width="18" height="13" fill="#eef4f8" stroke="#333" strokeWidth="1.400" />
            <path d="M13 18V25" stroke="#222" strokeWidth="3" />
          </Svg>
        </button>
        <button type="button" aria-label="マスクを有効化" disabled className="flex w-16 items-center justify-center rounded-sm border-2 border-[#737477] bg-linear-to-b from-[#87888a] to-[#939496]">
          <Svg w={56} h={40}>
            <rect x="6" y="4" width="25" height="26" fill="#7c7d7f" stroke="#6c6d6f" strokeWidth="1.500" />
            <path d="M11 14L16 16L20 12L22 10L24 14H27C28 20 24 24 18 24C12 24 10 20 11 14Z" fill="#a9aaac" stroke="#d4d4d4" strokeDasharray="1 1" />
            <path d="M44 5L55 16H33ZM44 37L55 26H33Z" fill="#707173" />
            <path d="M27 27L39 38M39 27L27 38" stroke="#68696b" strokeWidth="4" />
          </Svg>
        </button>
      </div>
      <div className="flex min-h-0 flex-1 border-t-2 border-b-2 border-l-2 border-t-[#3b3b3e] border-b-[#6a6b6d] border-l-[#45464a]">
        <div className="w-1.5 shrink-0" />
        <ul className="flex-1 border-l-2 border-[#45464a] text-[22px] font-[350] text-[#f4f4f4]">
          <li className="flex h-[82px] border-b-2 border-[#45464a]">
            <button type="button" aria-label="レイヤー 1 の表示" className="flex w-12 items-center justify-center pr-1">
              <Eye />
            </button>
            <span className="flex w-12 items-center justify-center border-x-2 border-[#45464a] pr-1.5">
              <Svg w={28} h={26}>
                <path d="M1 25L6 17C9 11 14 9 18 9L20 12C19 17 14 20 9 21Z" fill="url(#wg)" stroke="#1a1a1a" strokeWidth="1.300" strokeLinejoin="round" />
                <path d="M1 25L12 15" stroke="#222" />
                <path d="M17 8L22 1L27 4L21 12Z" fill="#1a1a1a" />
              </Svg>
            </span>
            <button type="button" className="flex flex-1 items-center bg-linear-to-b from-[#93a4b1] to-[#7a8c98] pr-3 pl-2 text-left ring-1 ring-[#a3b6c2] ring-inset">
              <span className="h-[76px] w-[60px] shrink-0 border-2 border-black p-0.5">
                <span className="block h-full border-2 border-black">
                  <svg className="block h-full w-full" aria-hidden="true">
                    <rect width="100%" height="100%" fill="url(#chkLight)" />
                  </svg>
                </span>
              </span>
              <span className="ml-0.5 flex-1 whitespace-nowrap">
                <span className="block leading-[38px]">100 % 通常</span>
                <span className="block leading-[38px]">レイヤー 1</span>
              </span>
              <Grip />
            </button>
          </li>
          <li className="flex h-[82px] border-b-2 border-[#45464a]">
            <button type="button" aria-label="用紙の表示" className="flex w-12 items-center justify-center pr-1">
              <Eye />
            </button>
            <span className="flex w-12 items-center justify-center border-x-2 border-[#45464a]">
              <span className="h-[22px] w-[22px] border-2 border-t-[#6d6e70] border-r-[#9d9ea0] border-b-[#9d9ea0] border-l-[#6d6e70]" />
            </span>
            <button type="button" className="flex flex-1 items-center pr-3 pl-3 text-left">
              <span className="h-[68px] w-[52px] shrink-0 border-2 border-black bg-white" />
              <span className="ml-1.5 flex-1">
                <Svg w={48} h={40}>
                  <rect x="7" y="1" width="38" height="38" fill="#fff" stroke="#000" strokeWidth="2" />
                  <path d="M12 4H28L40 15V36H12Z" fill="url(#paper)" stroke="#222" strokeWidth="1.200" />
                  <path d="M28 4V15H40Z" fill="#fff" stroke="#222" strokeWidth="1.200" />
                </Svg>
                <span className="block leading-7">用紙</span>
              </span>
              <Grip />
            </button>
          </li>
        </ul>
        <ScrollTrack />
        <div className="w-1 border-l-2 border-[#55565a]" />
      </div>
      <div className="flex h-12 shrink-0 justify-end gap-2 pr-2">
        <button type="button" aria-label="新規ラスターレイヤー">
          <FooterIconPage />
        </button>
        <button type="button" aria-label="新規レイヤーフォルダー">
          <Svg>
            <path d="M5 7H20L23 12H39V36H5Z" fill="#a9a9a9" stroke="#4a4a4c" strokeWidth="1.500" />
            <path d="M25 18H44V35L39 41H25Z" fill="url(#paper)" stroke="#222" strokeWidth="1.500" />
            <path d="M35 41V34H44Z" fill="#fff" stroke="#222" strokeWidth="1.200" />
          </Svg>
        </button>
        <button type="button" aria-label="下のレイヤーに転写" disabled>
          <MergeIcon top="#a9aaac" bottom="#6b6c6e" stroke="#77787a" />
        </button>
        <button type="button" aria-label="下のレイヤーに結合">
          <MergeIcon top="#2b2b2b" bottom="#ffffff" stroke="#222" dashed />
        </button>
        <button type="button" aria-label="レイヤーマスクを作成">
          <Svg>
            <rect x="5" y="11" width="38" height="26" fill="url(#dark)" stroke="#2c2c2c" strokeWidth="1.500" />
            <circle cx="24" cy="24" r="8" fill="#fff" stroke="#222" strokeWidth="1.200" />
          </Svg>
        </button>
        <button type="button" aria-label="レイヤーを削除">
          <FooterIconTrash />
        </button>
      </div>
    </Panel>
  );
}

/* ---------- page ---------- */

export default function App() {
  return (
    <div className="relative flex h-screen overflow-hidden bg-[#8b8c8e] font-['Inter','Noto_Sans_CJK_JP',sans-serif]">
      <Defs />
      <KeyStrip />
      <div className="flex min-w-0 flex-1 flex-col pt-12">
        <MenuBar />
        <div className="flex min-h-0 flex-1">
          <Workspace />
          <Dock className="w-[426px]">
            <ToolPanel />
            <ToolPropertyPanel />
            <SubToolPanel />
          </Dock>
          <Dock className="w-[356px]">
            <LayerPropertyPanel />
            <LayerPanel />
          </Dock>
          <aside className="w-7 shrink-0 border-l-2 border-[#55565a] bg-[#6b6b6b]">
            <div className="flex h-10 items-center justify-center border-t-2 border-b-2 border-t-[#858688] border-b-[#3f3f41] bg-linear-to-b from-[#717171] to-[#5d5d5d]">
              <button type="button" aria-label="パレットを展開">
                <Svg w={22} h={26}>
                  <path d="M11 0L0 13L11 26V19L7 13L11 7ZM21 0L10 13L21 26V19L17 13L21 7Z" fill="#a3a4a6" />
                </Svg>
              </button>
            </div>
          </aside>
        </div>
      </div>
      <StatusBar />
      <div className="absolute bottom-4 left-1/2 h-2.5 w-[690px] -translate-x-1/2 rounded-full bg-[#e6e6e6]" />
    </div>
  );
}
